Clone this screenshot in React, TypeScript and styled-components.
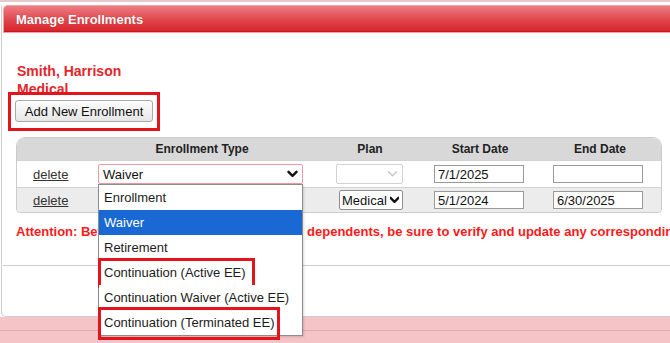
import React from "react";
import styled, { createGlobalStyle } from "styled-components";

const GlobalStyle = createGlobalStyle`
  html, body {
    margin: 0;
    padding: 0;
    background: #fff;
    overflow: hidden;
  }
  body {
    font-family: "Liberation Sans", Arial, sans-serif;
    color: #222;
  }
`;

const enrollmentTypes = [
  { label: "Enrollment" },
  { label: "Waiver", selected: true },
  { label: "Retirement" },
  { label: "Continuation (Active EE)", mark: { top: -2, width: 157, height: 30 } },
  { label: "Continuation Waiver (Active EE)" },
  { label: "Continuation (Terminated EE)", mark: { top: -3, width: 182, height: 33 } },
];

const Chevron = ({ faint, small }: { faint?: boolean; small?: boolean }) => (
  <svg width={small ? 9 : 11} height="8" viewBox={small ? "1 0 9 8" : "0 0 11 8"}>
    <path
      d="M1.5 1.8 L5.5 5.8 L9.5 1.8"
      fill="none"
      stroke={faint ? "#c4c4c4" : "#111"}
      strokeWidth={faint ? 1.3 : 2.4}
      strokeLinecap="round"
      strokeLinejoin="round"
    />
  </svg>
);

export default function App() {
  return (
    <Page>
      <GlobalStyle />
      <TopStrip />
      <Panel>
        <PanelHeader>Manage Enrollments</PanelHeader>
        <PanelBody>
          <Name>
            Smith, Harrison
            <br />
            Medical
          </Name>
          <Callout>
            <Button>Add New Enrollment</Button>
          </Callout>

          <Table>
            <HeadRow>
              <HeadCell />
              <HeadCell>Enrollment Type</HeadCell>
              <HeadCell>Plan</HeadCell>
              <HeadCell>Start Date</HeadCell>
              <HeadCell $shift={11}>End Date</HeadCell>
            </HeadRow>

            <Row>
              <Cell $pad={16}>
                <DeleteLink>delete</DeleteLink>
              </Cell>
              <Cell $pad={2}>
                <SelectWrap>
                  <SelectBox $w={205} $focus>
                    <span>Waiver</span>
                    <Chevron />
                  </SelectBox>
                  <Dropdown>
                    {enrollmentTypes.map((t) => (
                      <Option key={t.label} $selected={t.selected}>
                        {t.label}
                        {t.mark && (
                          <Mark
                            style={{
                              top: t.mark.top,
                              width: t.mark.width,
                              height: t.mark.height,
                            }}
                          />
                        )}
                      </Option>
                    ))}
                  </Dropdown>
                </SelectWrap>
              </Cell>
              <Cell $right={29}>
                <SelectBox $w={67} $disabled>
                  <span />
                  <Chevron faint />
                </SelectBox>
              </Cell>
              <Cell $pad={2}>
                <DateInput>7/1/2025</DateInput>
              </Cell>
              <Cell $pad={25}>
                <DateInput />
              </Cell>
            </Row>

            <Row $shade $last>
              <Cell $pad={16}>
                <DeleteLink>delete</DeleteLink>
              </Cell>
              <Cell />
              <Cell $right={29}>
                <SelectBox $w={64} $tight>
                  <span>Medical</span>
                  <Chevron small />
                </SelectBox>
              </Cell>
              <Cell $pad={2}>
                <DateInput>5/1/2024</DateInput>
              </Cell>
              <Cell $pad={25}>
                <DateInput>6/30/2025</DateInput>
              </Cell>
            </Row>
          </Table>

          <Attention>
            Attention: Before modifying enrollment(s) with dependents, be sure
            to verify and update any corresponding dependent records.
          </Attention>
        </PanelBody>
        <PanelFoot />
      </Panel>
      <PinkBand />
    </Page>
  );
}

const Page = styled.div`
  width: 670px;
  height: 343px;
  overflow: hidden;
  display: flex;
  flex-direction: column;
`;

const TopStrip = styled.div`
  height: 2px;
  margin-bottom: 3px;
  background: #e6c9cb;
  flex-shrink: 0;
`;

const Panel = styled.div`
  margin-left: 1px;
  height: 312px;
  flex-shrink: 0;
  display: flex;
  flex-direction: column;
  border-left: 1px solid #cfcfcf;
  border-bottom: 1px solid #cfcfcf;
  border-bottom-left-radius: 5px;
  box-sizing: border-box;
  background: #fff;
`;

const PanelHeader = styled.div`
  height: 28px;
  margin-left: 1px;
  box-sizing: border-box;
  display: flex;
  align-items: center;
  padding-left: 12px;
  border: 1px solid #f0a2a6;
  border-right: none;
  border-radius: 5px 0 0 0;
  background: linear-gradient(#ec7d83, #e0454c 55%, #d8222a);
  box-shadow: inset 0 -1px 0 #c8161e;
  color: #fff;
  font-weight: bold;
  font-size: 13px;
  text-shadow: 0 0 1px rgba(150, 0, 0, 0.5);
  white-space: nowrap;
`;

const PanelBody = styled.div`
  height: 233px;
  box-sizing: border-box;
  padding: 29px 0 0 13px;
  border-bottom: 1px solid #cdcdcd;
  margin-left: 1px;
  white-space: nowrap;
`;

const PanelFoot = styled.div`
  flex: 1;
`;

const Name = styled.div`
  margin-left: 1px;
  font-size: 14px;
  line-height: 18px;
  font-weight: bold;
  color: #e2262d;
`;

const Callout = styled.div`
  position: relative;
  margin: -6px 0 0 -8px;
  width: 152px;
  height: 39px;
  box-sizing: border-box;
  border: 3px solid #e3141b;
  padding: 5px 0 0 4px;
`;

const Button = styled.div`
  width: 138px;
  height: 22px;
  box-sizing: border-box;
  display: flex;
  align-items: center;
  justify-content: center;
  border: 1px solid #a9a9a9;
  border-radius: 3px;
  background: linear-gradient(#fdfdfd, #e6e6e6);
  font-size: 13px;
  color: #111;
`;

const Table = styled.div`
  margin-top: 6px;
  width: 644px;
  border: 1px solid #cbcbcb;
  border-radius: 9px 9px 4px 4px;
  display: flex;
  flex-direction: column;
`;

const HeadRow = styled.div`
  display: grid;
  grid-template-columns: 79px 212px 124px 96px 1fr;
  height: 22px;
  align-items: center;
  background: #d8d8d8;
  border-radius: 8px 8px 0 0;
`;

const HeadCell = styled.div<{ $shift?: number }>`
  text-align: center;
  font-weight: bold;
  font-size: 12px;
  color: #222;
  padding-left: ${({ $shift }) => ($shift ? `${$shift}px` : 0)};
`;

const Row = styled.div<{ $shade?: boolean; $last?: boolean }>`
  display: grid;
  grid-template-columns: 79px 212px 124px 96px 1fr;
  height: ${({ $last }) => ($last ? "24px" : "26px")};
  align-items: center;
  background: ${({ $shade }) => ($shade ? "#ececec" : "#fff")};
  border-top: 1px solid #d2d2d2;
  border-radius: ${({ $last }) => ($last ? "0 0 4px 4px" : "0")};
`;

const Cell = styled.div<{ $pad?: number; $right?: number }>`
  display: flex;
  align-items: center;
  justify-content: ${({ $right }) => ($right !== undefined ? "flex-end" : "flex-start")};
  padding-left: ${({ $pad }) => $pad ?? 0}px;
  padding-right: ${({ $right }) => $right ?? 0}px;
`;

const DeleteLink = styled.span`
  font-size: 13px;
  color: #333;
  text-decoration: underline;
`;

const SelectWrap = styled.div`
  position: relative;
`;

const SelectBox = styled.div<{
  $w: number;
  $focus?: boolean;
  $disabled?: boolean;
  $tight?: boolean;
}>`
  width: ${({ $w }) => $w}px;
  height: 20px;
  box-sizing: border-box;
  display: flex;
  align-items: center;
  justify-content: space-between;
  padding: ${({ $tight }) => ($tight ? "0 3px 0 2px" : "0 4px")};
  background: #fff;
  border: 1px solid
    ${({ $focus, $disabled }) =>
      $focus ? "#ec9ca0" : $disabled ? "#d2d2d2" : "#8f8f8f"};
  border-radius: 2px;
  font-size: 13px;
  color: #111;
  white-space: nowrap;
`;

const Dropdown = styled.div`
  position: absolute;
  top: 100%;
  left: 0;
  width: 205px;
  box-sizing: border-box;
  border: 1px solid #8c8c8c;
  background: #fff;
  z-index: 10;
  box-shadow: 1px 1px 2px rgba(0, 0, 0, 0.15);
`;

const Option = styled.div<{ $selected?: boolean }>`
  position: relative;
  height: 25px;
  display: flex;
  align-items: center;
  padding-left: 5px;
  font-size: 13px;
  color: ${({ $selected }) => ($selected ? "#fff" : "#1c1c1c")};
  background: ${({ $selected }) => ($selected ? "#1a68d3" : "#fff")};
`;

const Mark = styled.span`
  position: absolute;
  left: -1px;
  box-sizing: border-box;
  border: 3px solid #e3141b;
  pointer-events: none;
`;

const DateInput = styled.div`
  width: 90px;
  height: 18px;
  box-sizing: border-box;
  display: flex;
  align-items: center;
  padding-left: 3px;
  background: #fff;
  border: 1px solid #9a9a9a;
  font-size: 13px;
  color: #111;
`;

const Attention = styled.div`
  margin-top: 11px;
  font-size: 13px;
  line-height: 16px;
  font-weight: bold;
  color: #ff1a1a;
`;

const PinkBand = styled.div`
  flex: 1;
  background: linear-gradient(
    #f5c4c6 0,
    #f5c4c6 13px,
    #dcaeb0 13px,
    #dcaeb0 14px,
    #f5c4c6 14px
  );
`;
